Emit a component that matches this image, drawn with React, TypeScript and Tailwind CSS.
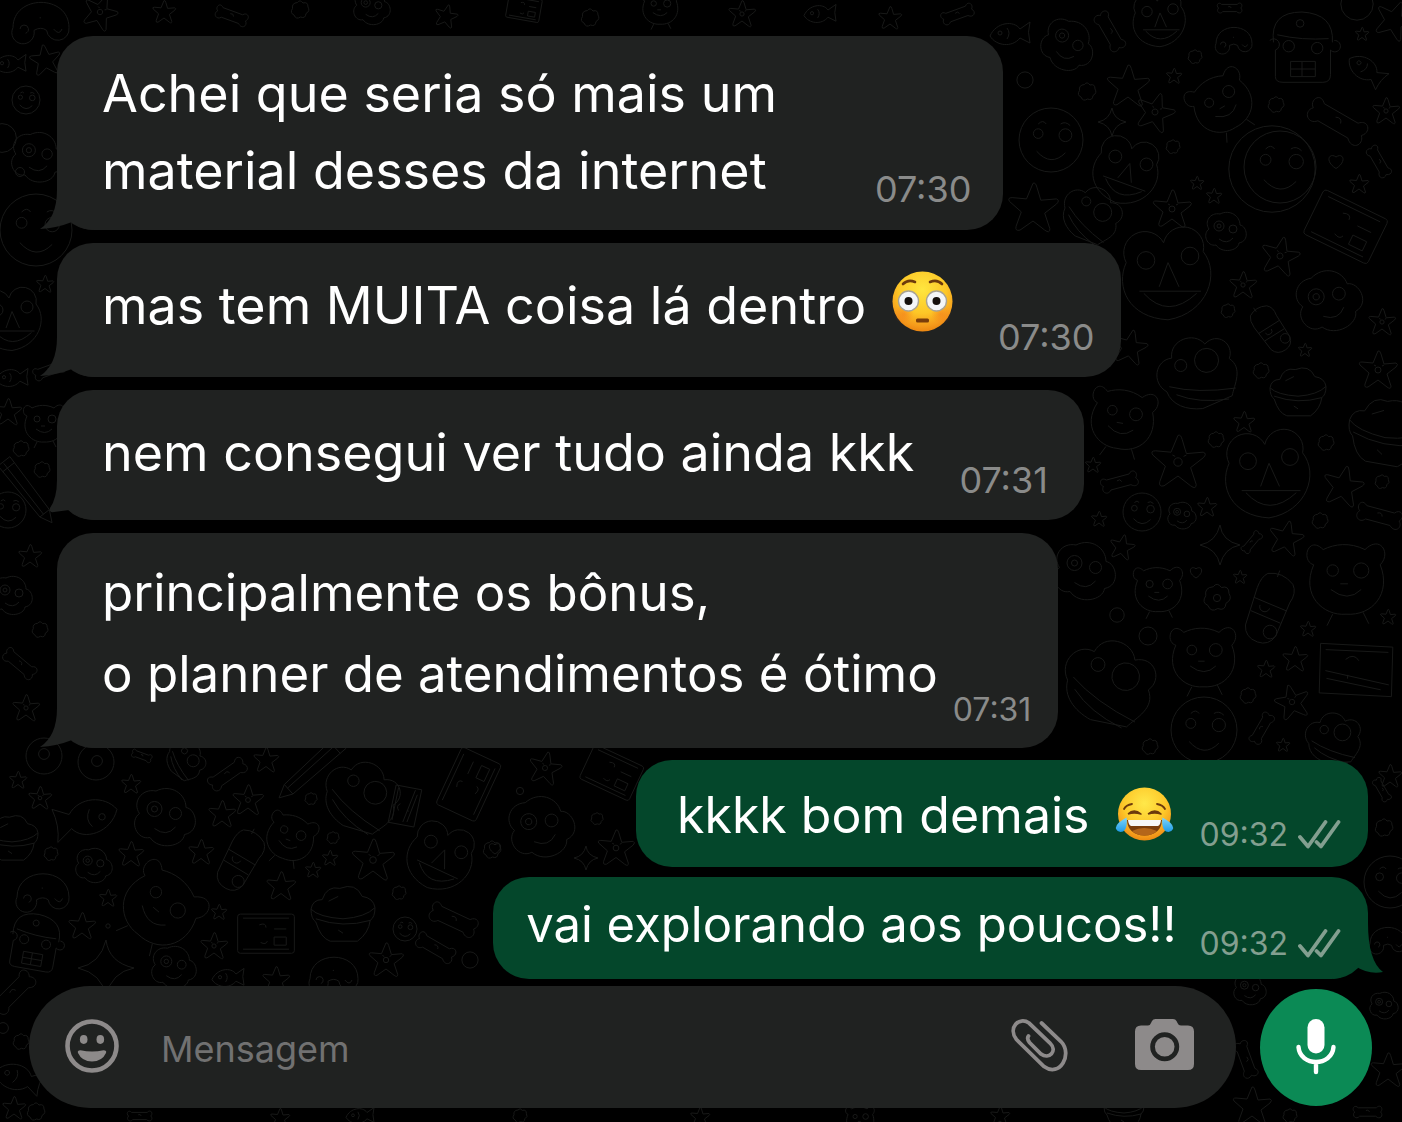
import type { ReactNode } from 'react'

type Doodle = [kind: string, x: number, y: number, scale: number, rotate?: number]

// Outlines are drawn around 0,0 in a box of roughly 40 x 40
const outlines: Record<string, string> = {
  star: 'M0-19Q2-20 3-16L6-6 18-7Q21-6 18-3L9 4 13 16Q13 20 9 17L0 10-10 17Q-14 18-13 14L-9 3-18-5Q-20-8-16-8L-5-7Z',
  starFace:
    'M0-19Q2-20 3-16L6-6 18-7Q21-6 18-3L9 4 13 16Q13 20 9 17L0 10-10 17Q-14 18-13 14L-9 3-18-5Q-20-8-16-8L-5-7ZM-3 0a3 3 0 1 0 6 0a3 3 0 1 0-6 0M-4-5l2 1M4-4l2-1',
  flower:
    'M-5-15Q0-22 6-14Q16-17 16-6Q21 2 12 7Q11 18 1 14Q-8 20-12 10Q-21 6-15-3Q-17-14-5-15Z',
  spark: 'M0-20Q2-4 20 0Q4 3 0 20Q-3 4-20 0Q-4-3 0-20Z',
  ring: 'M-18 0a18 18 0 1 0 36 0a18 18 0 1 0-36 0',
  face: 'M-20 0a20 20 0 1 0 40 0a20 20 0 1 0-40 0M-11-4a3 3 0 1 0 6 0a3 3 0 1 0-6 0M5-3a4 4 0 1 0 8 0a4 4 0 1 0-8 0M-9 7Q0 17 9 8M-8-10Q-5-13-3-10M6-10Q9-12 12-9',
  bear: 'M-12-16C-20-24-24-10-17-8C-24 8-12 19 0 18C14 19 24 7 18-8C24-14 18-24 10-16C2-20-6-19-12-16M-10-5a3 3 0 1 0 6 0a3 3 0 1 0-6 0M4-5a4 4 0 1 0 8 0a4 4 0 1 0-8 0M-8 5Q1 12 8 5M-3 2h4M-7 18l-3 6M9 17l3 6',
  dog: 'M-6-18C-16-20-22-10-17-3C-24 2-19 15-10 13C-4 22 12 19 13 11C24 9 21-6 14-7C14-16 4-23-6-18M-12-6a5 5 0 1 0 10 0a5 5 0 1 0-10 0M3-3a4 4 0 1 0 8 0a4 4 0 1 0-8 0M-7 7Q1 13 7 6M-9-6a2 2 0 1 0 4 0a2 2 0 1 0-4 0',
  twins:
    'M-2-16a9 9 0 1 1 18 4C24-2 18 16 0 19C-18 18-24 4-19-7A9 9 0 0 1-2-16M-14-8a4 4 0 1 0 8 0a4 4 0 1 0-8 0M6-10a4 4 0 1 0 8 0a4 4 0 1 0-8 0M-4 4l4-11 5 11M-13 6h28M-11 7Q0 19 13 7',
  shell:
    'M-18 4C-24-3-18-13-10-11C-8-20 5-20 8-12C16-16 22-7 17-1C22 6 15 12 12 17L-4 18C-12 16-18 11-18 4M-16 2Q-4 10 15 14M-14 7Q-5 15 10 18M0-4a6 6 0 1 0 12 0a6 6 0 1 0-12 0M-10-6a3 3 0 1 0 6 0a3 3 0 1 0-6 0',
  bowl: 'M-20-3Q-19-9-13-9Q-10-18-2-16Q8-20 12-11Q19-10 20-4Q14 2 0 3Q-15 2-20-3M-20-3Q-20 3-17 5Q-14 15-8 17H9Q16 12 17 4Q20 2 20-4M-17 3Q0 9 17 4M-9-8l6-3M-3 10l3 2',
  card: 'M-19-14h38q2 0 2 2v25q0 2-2 2h-38q-2 0-2-2v-25q0-2 2-2M-17-11H17M-17 12H17M-5-6q5-2 5 2M-4 7q4 2 5-1M6-3h9M6 3h9v6H6Z',
  book: 'M-20-12L18-14 20 12-18 14ZM-17-9L16-11M-16 2L18 6M-15 6L14 9M-6-5q4-4 7 0M-4 5v-2',
  capsule:
    'M-8-20Q0-24 8-19Q12-15 10-8L9 13Q7 20 0 20Q-8 20-10 13L-11-10Q-11-17-8-20M-11-4L10-3M-10 4L9 5M-6-1a3 3 0 1 0 6 0M1 12a4 4 0 1 0 8 0a4 4 0 1 0-8 0M-2-24v4',
  bone: 'M-14-6C-20-12-24-3-19 0C-24 5-17 12-12 6L11 6C17 12 23 5 18 0C23-5 17-12 12-6ZM-3-2q4-2 5 2',
  pencil: 'M-5-26L5-26 4 18 0 26-4 18ZM-1-25V18M-5-21H5M-4 18H4',
  fish: 'M-20 2C-14-12 4-14 10-5L20-12Q17-2 20 9L10 4C2 14-14 12-20 2M-12-1a2 2 0 1 0 4 0a2 2 0 1 0-4 0M-3-6q4 5 0 11',
  robot:
    'M-15-4Q-17-20 0-20Q17-19 16-4M-17-5a3 3 0 1 1 3 5V14Q-14 17-10 17H11Q15 17 15 13V0a3 3 0 1 0 2-5M-13-8Q0-5 14-6M-10-2a3 3 0 1 0 6 0a3 3 0 1 0-6 0M5-1a3 3 0 1 0 6 0a3 3 0 1 0-6 0M-6 6H7V14H-6ZM0 6v8M-6 10H7M-3-14a2 2 0 1 0 4 0a2 2 0 1 0-4 0',
  mushroom:
    'M-20 4C-20-20 20-20 20 4A8 8 0 1 1 4 6Q0 3-5 6A8 8 0 1 1-20 4M-15 5a3 3 0 1 1 4 3M9 5q4 5 6 0M-1-3h1',
  heart: 'M0 15C-24 0-13-18 0-8C14-18 23 1 0 15Z',
}

const doodles: Doodle[] = [
  // top edge and right column
  ['mushroom', 41, 22, 1.4],
  ['starFace', 100, 12, 0.9, 20],
  ['star', 164, 12, 0.6],
  ['bone', 232, 16, 0.8, 20],
  ['flower', 300, 10, 0.5],
  ['dog', 372, 8, 0.9],
  ['star', 446, 16, 0.6, 12],
  ['card', 524, 8, 0.8, 10],
  ['flower', 590, 18, 0.5],
  ['bear', 660, 8, 0.9],
  ['starFace', 742, 14, 0.7],
  ['fish', 820, 14, 0.8],
  ['star', 890, 18, 0.6],
  ['bone', 958, 14, 0.8, -20],
  ['fish', 1010, 34, 1],
  ['dog', 1068, 46, 1.3, 20],
  ['bone', 1110, 32, 1, 60],
  ['twins', 1160, 22, 1.3],
  ['flower', 1195, 57, 0.4],
  ['mushroom', 1234, 40, 0.9],
  ['bone', 1230, 8, 0.6],
  ['robot', 1302, 50, 1.9],
  ['ring', 1357, 4, 0.9],
  ['star', 1362, 34, 0.35],
  ['fish', 1366, 70, 1, 40],
  ['star', 1394, 20, 1, 20],
  ['ring', 1025, 80, 0.45],
  ['flower', 1087, 92, 0.5],
  ['star', 1128, 86, 1.1],
  ['star', 1174, 76, 0.4],
  ['bear', 1222, 104, 1.5, -30],
  ['flower', 1276, 105, 0.45],
  ['starFace', 1386, 111, 0.7],
  ['bone', 1338, 122, 1.5, 30],
  ['face', 1051, 140, 1.6],
  ['starFace', 1155, 112, 1, 15],
  ['spark', 1112, 122, 0.7],
  ['flower', 1173, 147, 0.4],
  ['twins', 1126, 174, 1.6, 20],
  ['face', 1280, 167, 1.8],
  ['ring', 1272, 169, 2.4],
  ['heart', 1336, 161, 0.5],
  ['bone', 1379, 162, 0.8, 60],
  ['star', 1359, 184, 0.5],
  ['star', 1197, 183, 0.35],
  ['star', 1214, 196, 0.4],
  ['star', 1033, 208, 1.3],
  ['starFace', 1172, 209, 1],
  ['shell', 1092, 214, 1.5, 25],
  ['card', 1346, 226, 1.7, 26],
  ['dog', 1226, 232, 1],
  ['starFace', 1280, 256, 1, 10],
  ['twins', 1168, 278, 2.2],
  ['starFace', 1243, 285, 0.7],
  ['dog', 1330, 302, 1.6, -20],
  ['starFace', 1382, 322, 0.7],
  ['flower', 1228, 311, 0.4],
  ['capsule', 1272, 330, 1.2, -35],
  ['star', 1130, 347, 0.9, 10],
  ['shell', 1198, 372, 2, -20],
  ['flower', 1261, 371, 0.45],
  ['star', 1305, 350, 0.35],
  ['starFace', 1378, 370, 1],
  ['bowl', 1298, 392, 1.4],
  ['bear', 1122, 420, 1.6, 10],
  ['flower', 1216, 440, 0.45],
  ['star', 1244, 422, 0.55],
  ['bowl', 1386, 432, 1.9, 10],
  ['flower', 1326, 443, 0.45],
  ['starFace', 1178, 462, 1.4],
  ['twins', 1269, 478, 2.1],
  ['star', 1343, 486, 1.05, 10],
  ['star', 1093, 465, 0.4],
  ['bone', 1120, 482, 0.9, -15],
  ['flower', 1382, 482, 0.4],
  ['face', 1142, 512, 0.95],
  ['dog', 1182, 516, 0.7],
  ['star', 1207, 507, 0.5],
  ['star', 1099, 519, 0.4],
  ['bone', 1380, 516, 1.1, 15],
  ['flower', 1320, 521, 0.45],
  ['star', 1122, 547, 0.65, 10],
  ['spark', 1220, 545, 1],
  ['star', 1286, 538, 0.9, 10],
  ['bone', 1252, 542, 0.6, -50],
  ['dog', 1085, 572, 1.5],
  ['bear', 1158, 590, 1.2],
  ['heart', 1196, 572, 0.4],
  ['flower', 1217, 598, 0.75],
  ['ring', 1217, 598, 0.2],
  ['star', 1240, 577, 0.35],
  ['capsule', 1269, 610, 1.7, 20],
  ['bear', 1346, 580, 1.9],
  ['ring', 1117, 615, 0.4],
  ['ring', 1148, 636, 0.5],
  ['star', 1308, 629, 0.4],
  ['star', 1388, 617, 0.4],
  ['bear', 1203, 658, 1.6],
  ['shell', 1110, 682, 2.3, 15],
  ['star', 1295, 659, 0.65],
  ['star', 1266, 669, 0.45],
  ['book', 1356, 670, 1.9, 6],
  ['flower', 1248, 696, 0.45],
  ['starFace', 1292, 702, 0.9, -15],
  ['face', 1204, 730, 1.65],
  ['bone', 1262, 728, 0.8, -60],
  ['star', 1283, 745, 0.35],
  ['shell', 1334, 738, 1.4],
  ['flower', 1150, 747, 0.45],
  ['star', 1390, 776, 0.6],
  ['bone', 1382, 790, 0.6, 60],
  ['flower', 1384, 828, 0.5],
  ['face', 1390, 882, 1.3],
  ['mushroom', 1388, 940, 0.9],

  // left edge
  ['star', 45, 60, 0.8, -10],
  ['fish', 10, 64, 0.8],
  ['face', 26, 100, 0.7],
  ['ring', 2, 138, 0.8],
  ['dog', 38, 158, 1.3],
  ['ring', 20, 172, 0.25],
  ['face', 36, 230, 1.8],
  ['star', 45, 284, 0.45],
  ['twins', 12, 322, 1.5],
  ['fish', 12, 378, 0.8],
  ['bone', 50, 370, 0.8, -20],
  ['star', 8, 412, 0.7],
  ['bear', 44, 424, 1],
  ['flower', 21, 449, 0.45],
  ['flower', 42, 470, 0.45],
  ['pencil', 28, 492, 1.5, -38],
  ['face', 8, 510, 0.9],
  ['star', 30, 556, 0.6],
  ['dog', 12, 596, 1],
  ['flower', 40, 630, 0.45],
  ['bone', 20, 664, 0.9, 40],
  ['starFace', 26, 708, 0.7],

  // under the incoming messages
  ['ring', 44, 756, 1],
  ['ring', 44, 754, 0.3],
  ['ring', 96, 762, 1],
  ['ring', 97, 761, 0.3],
  ['starFace', 40, 798, 0.6],
  ['star', 18, 780, 0.45],
  ['bone', 142, 756, 0.5, 20],
  ['star', 131, 784, 0.5],
  ['fish', 86, 818, 1.6, 170],
  ['dog', 165, 818, 1.5],
  ['shell', 186, 760, 1, 40],
  ['bone', 228, 774, 1, -35],
  ['star', 266, 760, 0.65],
  ['pencil', 310, 770, 1.6, 48],
  ['star', 222, 814, 0.7],
  ['starFace', 248, 800, 0.8],
  ['flower', 311, 799, 0.35],
  ['shell', 362, 796, 1.9, 20],
  ['book', 405, 806, 1, -75],
  ['card', 468, 784, 1.5, -65],
  ['bowl', 12, 838, 1.3],
  ['flower', 51, 854, 0.4],
  ['star', 131, 854, 0.65],
  ['dog', 94, 866, 0.9],
  ['star', 201, 852, 0.65],
  ['capsule', 240, 862, 1.5, 28],
  ['bear', 290, 838, 1.2, 20],
  ['flower', 333, 838, 0.35],
  ['star', 330, 858, 0.4],
  ['star', 313, 870, 0.4],
  ['starFace', 373, 860, 1.1],
  ['twins', 440, 860, 1.6, 25],
  ['flower', 492, 850, 0.5],
  ['mushroom', 43, 892, 1.3],
  ['star', 108, 898, 0.45],
  ['bear', 160, 908, 1.9, 40],
  ['star', 281, 886, 0.75],
  ['flower', 399, 893, 0.4],
  ['star', 219, 912, 0.4],
  ['bowl', 343, 914, 1.6],
  ['card', 266, 933, 1.35],
  ['robot', 34, 944, 1.5, 10],
  ['star', 82, 926, 0.7],
  ['ring', 108, 926, 0.12],
  ['spark', 106, 968, 1.4],
  ['starFace', 214, 946, 0.7],
  ['face', 405, 929, 0.6],
  ['bone', 454, 920, 1.2, 25],
  ['bone', 436, 948, 1, 30],
  ['ring', 470, 960, 0.45],
  ['starFace', 386, 960, 0.9],
  ['dog', 174, 968, 1.1],
  ['mushroom', 334, 974, 1.2],
  ['fish', 228, 978, 0.8],
  ['star', 276, 980, 0.7],
  ['starFace', 545, 768, 0.85, 10],
  ['ring', 520, 791, 0.2],
  ['card', 612, 772, 1.3, 25],
  ['dog', 542, 828, 1.6, -15],
  ['flower', 597, 819, 0.35],
  ['starFace', 616, 848, 0.95],
  ['spark', 586, 858, 0.6],
  ['heart', 495, 848, 0.4],

  // around the composer
  ['bone', 14, 992, 1.2, -45],
  ['ring', 3, 1028, 0.3],
  ['flower', 21, 1042, 0.45],
  ['fish', 18, 1078, 1.2, 20],
  ['star', 14, 1108, 0.6],
  ['flower', 36, 1112, 0.5],
  ['bone', 140, 1116, 0.6],
  ['star', 280, 1118, 0.5],
  ['fish', 360, 1116, 0.7],
  ['flower', 520, 1116, 0.4],
  ['star', 700, 1117, 0.5],
  ['bear', 860, 1120, 0.7],
  ['bowl', 1124, 1110, 1],
  ['star', 1000, 1116, 0.5],
  ['dog', 1250, 990, 0.8],
  ['bone', 1246, 1060, 0.9, 70],
  ['star', 1252, 1106, 1],
  ['flower', 1290, 1116, 0.4],
  ['dog', 1384, 1006, 0.7],
  ['star', 1388, 1070, 0.9],
  ['bone', 1368, 1112, 0.7],
]

function Wallpaper() {
  return (
    <svg className="absolute inset-0 h-full w-full" fill="none" stroke="#181918" aria-hidden="true">
      {doodles.map(([kind, x, y, scale, rotate = 0], i) => (
        <path
          key={i}
          d={outlines[kind]}
          transform={`translate(${x} ${y}) rotate(${rotate}) scale(${scale})`}
          vectorEffect="non-scaling-stroke"
        />
      ))}
    </svg>
  )
}

function FlushedEmoji() {
  return (
    <svg viewBox="0 0 61 61" className="mt-1 ml-[26px] size-[61px]" role="img" aria-label="😳">
      <defs>
        <radialGradient id="flushed" cx="0.5" cy="0.3" r="0.72">
          <stop offset="0" stopColor="#ffe63f" />
          <stop offset="0.55" stopColor="#fdc727" />
          <stop offset="0.85" stopColor="#f59a1b" />
          <stop offset="1" stopColor="#e9820f" />
        </radialGradient>
        <radialGradient id="blush">
          <stop offset="0" stopColor="#f2661b" stopOpacity="0.4" />
          <stop offset="1" stopColor="#f2661b" stopOpacity="0" />
        </radialGradient>
      </defs>
      <circle cx="30.500" cy="30.500" r="30" fill="url(#flushed)" />
      <circle cx="12" cy="43" r="10" fill="url(#blush)" />
      <circle cx="49" cy="43" r="10" fill="url(#blush)" />
      <path d="M11 13Q16 8 23 11M38 11Q45 8 50 13" fill="none" stroke="#6d3a0c" strokeWidth="2.600" strokeLinecap="round" />
      <circle cx="16.500" cy="30" r="10" fill="#f4f6f8" stroke="#a9a392" strokeWidth="1.400" />
      <circle cx="44.500" cy="30" r="10" fill="#f4f6f8" stroke="#a9a392" strokeWidth="1.400" />
      <circle cx="16.500" cy="30" r="4" fill="#15100c" />
      <circle cx="44.500" cy="30" r="4" fill="#15100c" />
      <rect x="24" y="47.500" width="13" height="4" rx="1.500" fill="#7a3d0b" />
    </svg>
  )
}

function JoyEmoji() {
  return (
    <svg viewBox="0 0 59 54" className="mt-2 ml-[26px] h-[54px] w-[59px]" role="img" aria-label="😂">
      <defs>
        <radialGradient id="joy" cx="0.5" cy="0.3" r="0.72">
          <stop offset="0" stopColor="#ffe84a" />
          <stop offset="0.55" stopColor="#fdc92a" />
          <stop offset="0.85" stopColor="#f59d1c" />
          <stop offset="1" stopColor="#e9840f" />
        </radialGradient>
        <linearGradient id="tear" x1="0" y1="0" x2="0" y2="1">
          <stop offset="0" stopColor="#7fd6fb" />
          <stop offset="1" stopColor="#1f9be6" />
        </linearGradient>
      </defs>
      <circle cx="29.500" cy="27" r="26.500" fill="url(#joy)" />
      <path
        d="M9 22Q11 18 17 17M42 17Q48 18 50 22"
        fill="none"
        stroke="#6d3a0c"
        strokeWidth="1.800"
        strokeLinecap="round"
      />
      <path
        d="M13 27Q19 21 26 27Q19 25 13 27M33 27Q40 21 46 27Q40 25 33 27"
        fill="#6d3a0c"
        stroke="#6d3a0c"
        strokeWidth="1.600"
        strokeLinejoin="round"
      />
      <path d="M12 33H47Q46 48 29.500 48.500Q13 48 12 33Z" fill="#7a3d0b" />
      <path d="M13 33H46Q45.500 38 43 39H16Q13.500 38 13 33Z" fill="#f7f7f7" />
      <path d="M17 44Q29 38 42 44Q37 48.500 29.500 48.500Q22 48.500 17 44Z" fill="#b4661a" />
      <path d="M11.500 30.500Q13 41 8 44.500Q3 46 1 42Q-.5 37 11.500 30.500Z" fill="url(#tear)" />
      <path d="M47.500 30.500Q46 41 51 44.500Q56 46 58 42Q59.500 37 47.500 30.500Z" fill="url(#tear)" />
    </svg>
  )
}

function Ticks() {
  return (
    <svg viewBox="0 0 43 30" className="h-[30px] w-[43px]" fill="none" stroke="currentColor" strokeWidth="3.800" role="img" aria-label="Entregue">
      <path
        d="M2 17L10 26.500L27.500 2M18.500 22L23 26.500L40.500 2"
        strokeLinejoin="round"
        strokeLinecap="round"
      />
    </svg>
  )
}

// Tail that sticks out of the bottom corner of a bubble
function Tail({ side, small }: { side: 'left' | 'right'; small?: boolean }) {
  if (side === 'right') {
    return (
      <svg viewBox="0 0 50 56" className="absolute -right-[15px] bottom-0 h-14 w-[50px] fill-[#04472b]" aria-hidden="true">
        <path d="M0 0H35Q35 38 50 49Q36 52 22 43Q14 55 0 56Z" />
      </svg>
    )
  }
  return (
    <svg viewBox="0 0 54 40" className="absolute bottom-0 -left-[17px] h-10 w-[54px] fill-[#202221]" aria-hidden="true">
      {small ? (
        <path d="M17 0Q17 18 10 28Q9 33 14 32L29 30Q37 39 54 40V0Z" />
      ) : (
        <path d="M17 0Q17 28 0 39Q17 38 32 32Q41 40 54 40V0Z" />
      )}
    </svg>
  )
}

interface IBubbleProps {
  time: string
  sent?: boolean
  tail?: 'normal' | 'small'
  className: string
  timeClass: string
  children: ReactNode
}

function Bubble({ time, sent, tail, className, timeClass, children }: IBubbleProps) {
  const side = sent ? 'self-end bg-[#04472b]' : 'self-start bg-[#202221]'
  return (
    <li className={`relative flex max-w-full items-end rounded-[36px] ${side} ${className}`}>
      {tail && <Tail side={sent ? 'right' : 'left'} small={tail === 'small'} />}
      <div className="relative">{children}</div>
      <div className={`relative flex items-center gap-2.5 ${sent ? 'text-[#839f90]' : 'text-[#8a8b8a]'} ${timeClass}`}>
        <time>{time}</time>
        {sent && <Ticks />}
      </div>
    </li>
  )
}

function Composer() {
  return (
    <form className="relative mt-[7px] flex items-center gap-6 pr-[30px] pl-[29px]">
      <div className="flex h-[122px] min-w-0 flex-1 items-center rounded-full bg-[#202221] pr-[42px] pl-9 text-[#8d8a8a]">
        <button type="button" aria-label="Emojis" className="shrink-0 pb-0.5">
          <svg viewBox="0 0 54 54" className="size-[54px]" fill="currentColor">
            <circle cx="27" cy="27" r="24.500" fill="none" stroke="currentColor" strokeWidth="4.600" />
            <ellipse cx="18.700" cy="20.500" rx="3.800" ry="4.400" />
            <ellipse cx="35.300" cy="20.500" rx="3.800" ry="4.400" />
            <path d="M15.500 31.200Q27 34 38.500 31.200Q42 31.200 41 34Q37 42.500 27 42.500Q17 42.500 13 34Q12 31.200 15.500 31.200Z" />
          </svg>
        </button>
        <input
          type="text"
          aria-label="Mensagem"
          placeholder="Mensagem"
          className="ml-[42px] h-14 min-w-0 flex-1 bg-transparent pt-1 text-4xl text-white outline-none placeholder:text-[#717171]"
        />
        <button type="button" aria-label="Anexar" className="shrink-0 pb-1">
          <svg viewBox="0 0 57 53" className="h-[53px] w-[57px]" fill="none" stroke="currentColor" strokeWidth="3.800" strokeLinecap="round">
            <path d="M30.500 4L50 22.500C62 35 49 59 33 47.500L5.500 20.500C-3.500 9 8 -3 18 4L39 24C47 32 38 41 30 35L18.500 23.500C16.500 21 16 19 17.500 17" />
          </svg>
        </button>
        <button type="button" aria-label="Câmera" className="ml-[67px] shrink-0 pb-1.5">
          <svg viewBox="0 0 59 51" className="h-[51px] w-[59px]" fill="currentColor">
            <path
              fillRule="evenodd"
              d="M6 6.500H13Q15 6.500 16 4L17 2Q18 0 20.500 0H38Q40.500 0 41.500 2L42.500 4Q43.500 6.500 46 6.500H53Q59 6.500 59 12.500V45Q59 51 53 51H6Q0 51 0 45V12.500Q0 6.500 6 6.500ZM15.200 27.700a14.500 14.500 0 1 0 29 0a14.500 14.500 0 1 0-29 0Z"
            />
            <circle cx="29.700" cy="27.700" r="9.800" />
          </svg>
        </button>
      </div>
      <button
        type="button"
        aria-label="Gravar áudio"
        className="flex h-[117px] w-28 shrink-0 items-center justify-center rounded-[50%] bg-[#0b8a55] text-white"
      >
        <svg viewBox="0 0 40 56" className="h-14 w-10" fill="none" stroke="currentColor" strokeWidth="4.400" strokeLinecap="round">
          <rect x="11.500" y="0" width="17" height="34.500" rx="8.500" fill="currentColor" stroke="none" />
          <path d="M2.500 28C4 48 36 48 37.500 28M20 43.500V53" />
        </svg>
      </button>
    </form>
  )
}

export default function App() {
  return (
    <main className="relative min-h-screen overflow-hidden bg-black pt-9 pb-3.5 font-['Inter',sans-serif] text-white">
      <Wallpaper />
      <ul className="relative flex flex-col gap-[13px] pl-[57px] text-[52px] leading-[77px]">
        <Bubble time="07:30" tail="normal" className="pr-8 pl-[45px]" timeClass="ml-[98px] pb-[21px] text-4xl">
          <p className="pt-[19px] pb-[21px]">
            Achei que seria só mais um
            <br />
            material desses da internet
          </p>
        </Bubble>
        <Bubble time="07:30" tail="normal" className="pr-[26px] pl-[45px]" timeClass="ml-[45px] pb-5 text-4xl">
          <p className="flex items-start pt-6 pb-[33px]">
            mas tem MUITA coisa lá dentro
            <FlushedEmoji />
          </p>
        </Bubble>
        <Bubble time="07:31" tail="small" className="pr-9 pl-[45px]" timeClass="ml-[45px] pb-5 text-4xl">
          <p className="pt-6 pb-[29px]">nem consegui ver tudo ainda kkk</p>
        </Bubble>
        <Bubble time="07:31" tail="normal" className="pr-[27px] pl-[45px]" timeClass="ml-[15px] pb-[18px] text-[32px] leading-10">
          <p className="pt-[19px] pb-[34px] text-[51px] leading-[81px]">
            principalmente os bônus,
            <br />
            o planner de atendimentos é ótimo
          </p>
        </Bubble>
      </ul>
      <ul className="relative mt-3 flex flex-col gap-2.5 pr-[34px] leading-[72px]">
        <Bubble time="09:32" sent className="pr-[27px] pl-[41px]" timeClass="ml-[25px] pb-3 text-[32px] leading-10">
          <p className="flex items-start pt-[19px] pb-4 text-[50px]">
            kkkk bom demais
            <JoyEmoji />
          </p>
        </Bubble>
        <Bubble time="09:32" sent tail="normal" className="pr-[27px] pl-[33px]" timeClass="ml-[23px] pb-[15px] text-[32px] leading-10">
          <p className="pt-3 pb-[18px] text-[49px]">vai explorando aos poucos!!</p>
        </Bubble>
      </ul>
      <Composer />
    </main>
  )
}
